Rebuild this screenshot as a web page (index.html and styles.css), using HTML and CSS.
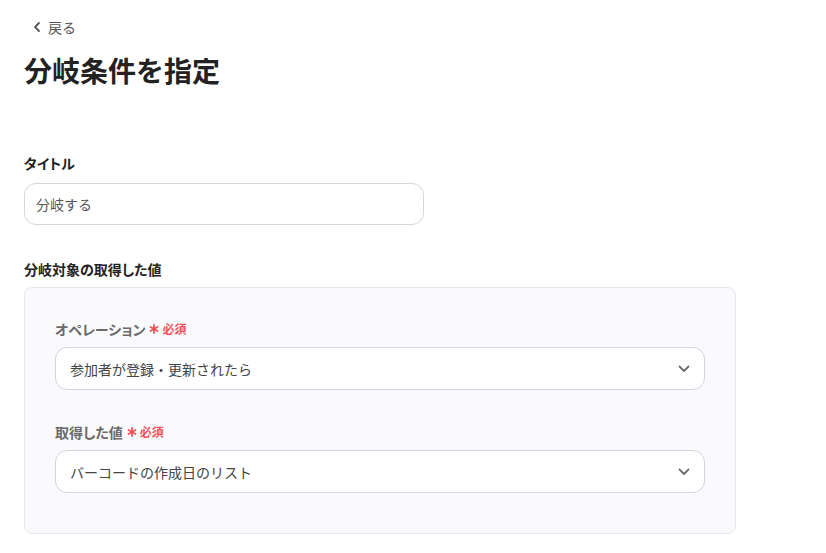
FILE: index.html
```html
<!DOCTYPE html>
<html lang="ja">
<head>
<meta charset="utf-8">
<title>分岐条件を指定</title>
<link rel="stylesheet" href="styles.css">
</head>
<body>
<div class="page">
  <a class="back" href="#">
    <svg class="back-icon" width="16" height="16" viewBox="0 0 16 16"><path d="M10 4 L6 8 L10 12" fill="none" stroke="#555" stroke-width="1.8" stroke-linecap="round" stroke-linejoin="round"/></svg>
    <span>戻る</span>
  </a>
  <h1 class="title">分岐条件を指定</h1>

  <div class="field-label first">タイトル</div>
  <div class="text-input">分岐する</div>

  <div class="field-label second">分岐対象の取得した値</div>
  <div class="panel">
    <div class="sub-label">オペレーション
      <svg class="req-star" width="10" height="10" viewBox="0 0 10 10"><g stroke="#f0525a" stroke-width="1.8" stroke-linecap="round"><path d="M5 1 V9"/><path d="M1.5 3 L8.5 7"/><path d="M1.5 7 L8.5 3"/></g></svg><span class="req">必須</span>
    </div>
    <div class="select">
      <span>参加者が登録・更新されたら</span>
      <svg class="chev" width="12" height="8" viewBox="0 0 12 8"><path d="M1.5 1.5 L6 6 L10.5 1.5" fill="none" stroke="#6f6f6f" stroke-width="1.8" stroke-linecap="round" stroke-linejoin="round"/></svg>
    </div>
    <div class="sub-label second">取得した値
      <svg class="req-star" width="10" height="10" viewBox="0 0 10 10"><g stroke="#f0525a" stroke-width="1.8" stroke-linecap="round"><path d="M5 1 V9"/><path d="M1.5 3 L8.5 7"/><path d="M1.5 7 L8.5 3"/></g></svg><span class="req">必須</span>
    </div>
    <div class="select">
      <span>バーコードの作成日のリスト</span>
      <svg class="chev" width="12" height="8" viewBox="0 0 12 8"><path d="M1.5 1.5 L6 6 L10.5 1.5" fill="none" stroke="#6f6f6f" stroke-width="1.8" stroke-linecap="round" stroke-linejoin="round"/></svg>
    </div>
  </div>
</div>
</body>
</html>
```

FILE: styles.css
```css
html, body {
  margin: 0;
  padding: 0;
  background: #ffffff;
}
body {
  font-family: "Noto Sans CJK JP", "Noto Sans", sans-serif;
  color: #222;
}
.page {
  padding: 16px 24px 0 24px;
  width: 712px;
}
.back {
  display: flex;
  align-items: center;
  gap: 3px;
  height: 22px;
  padding-left: 5px;
  font-size: 14px;
  line-height: 22px;
  color: #555;
  text-decoration: none;
}
.back-icon {
  display: block;
}
.title {
  margin: 12px 0 0 0;
  font-size: 28px;
  line-height: 40px;
  font-weight: 700;
  color: #222;
}
.field-label {
  font-size: 14px;
  line-height: 20px;
  font-weight: 700;
  color: #222;
  font-feature-settings: "palt";
}
.field-label.first {
  margin-top: 63px;
}
.field-label.second {
  margin-top: 34px;
}
.text-input {
  margin-top: 10px;
  width: 400px;
  height: 42px;
  box-sizing: border-box;
  border: 1px solid #d3d5de;
  border-radius: 12px;
  padding: 0 11px;
  display: flex;
  align-items: center;
  font-size: 14px;
  color: #555;
  background: #fff;
}
.panel {
  margin-top: 8px;
  box-sizing: border-box;
  width: 712px;
  border: 1px solid #e7e5eb;
  border-radius: 8px;
  background: #faf9fc;
  padding: 31px 30px 40px 30px;
}
.sub-label {
  display: flex;
  align-items: center;
  font-size: 14px;
  line-height: 20px;
  font-weight: 700;
  color: #6a6a6a;
  font-feature-settings: "palt";
}
.sub-label.second {
  margin-top: 32px;
}
.req-star {
  display: block;
  margin-left: 4px;
}
.req {
  margin-left: 3px;
  font-size: 12px;
  color: #f0525a;
  font-weight: 700;
}
.select {
  margin-top: 8px;
  height: 43px;
  box-sizing: border-box;
  border: 1px solid #d3d5de;
  border-radius: 12px;
  background: #fff;
  padding: 0 14px;
  display: flex;
  align-items: center;
  justify-content: space-between;
  font-size: 14px;
  color: #444;
}
.chev {
  display: block;
}
```
